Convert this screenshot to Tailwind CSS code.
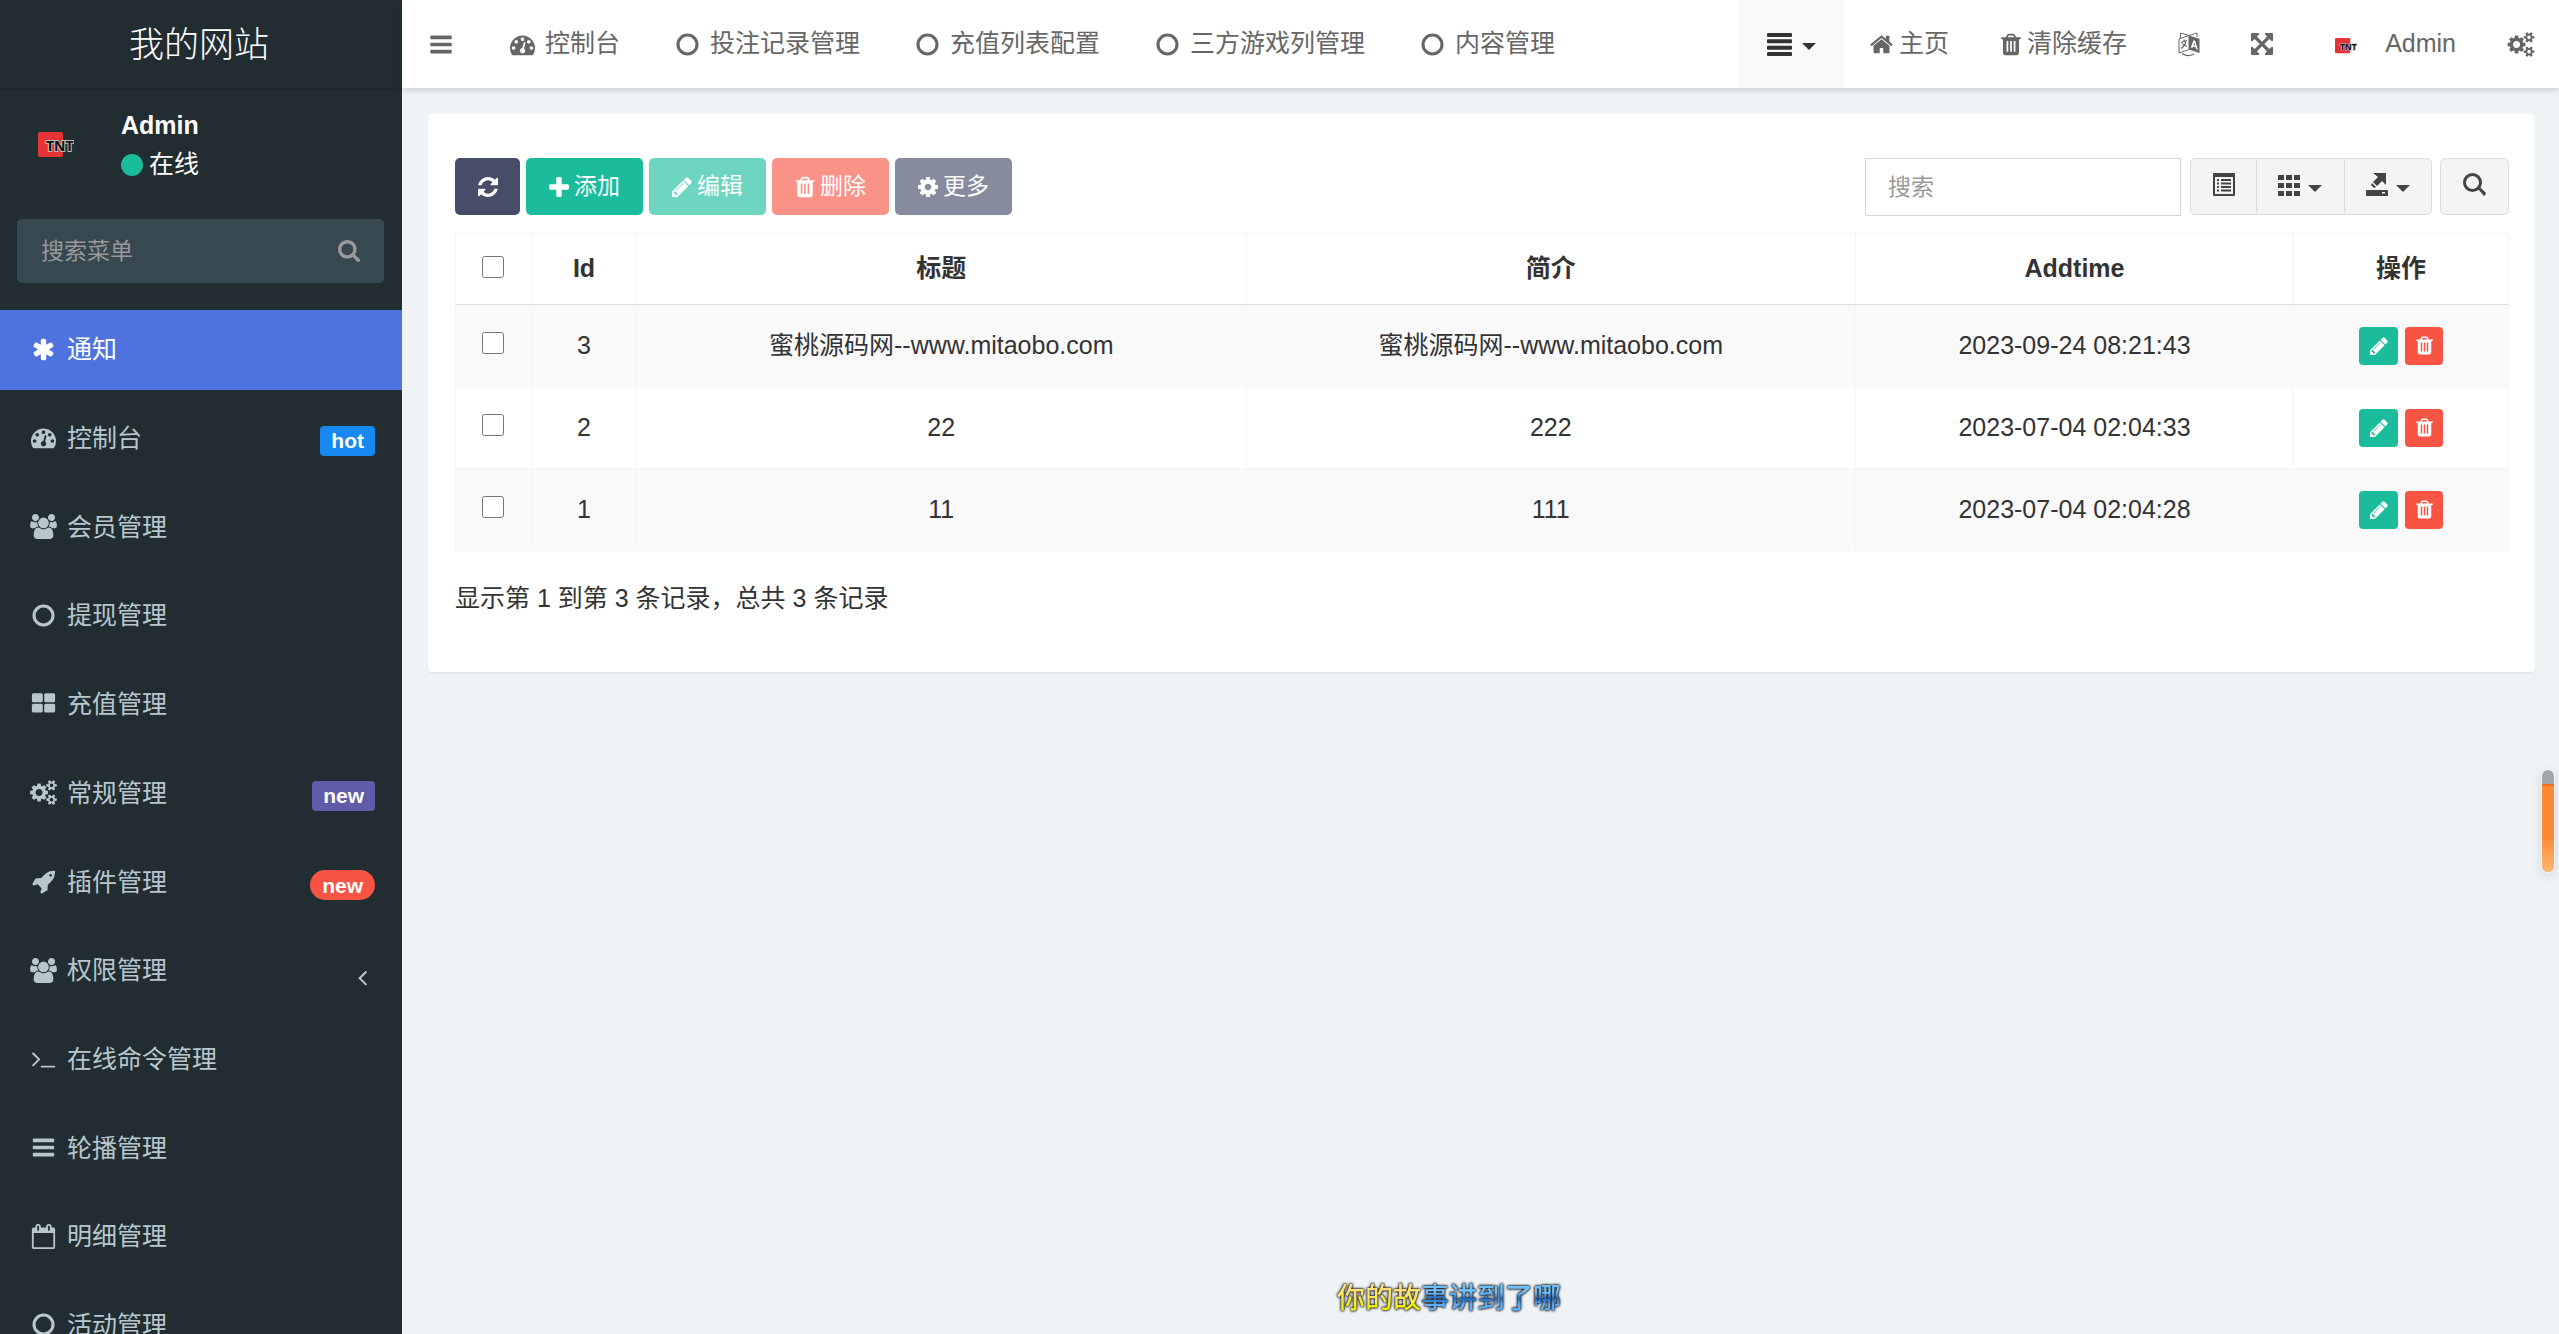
<!DOCTYPE html>
<html lang="zh-CN">
<head>
<meta charset="utf-8">
<meta name="viewport" content="width=device-width, initial-scale=1">
<title>我的网站</title>
<script src="https://cdn.jsdelivr.net/npm/@tailwindcss/browser@4"></script>
</head>
<body class="flex h-screen overflow-hidden bg-[#eff3f6] font-['Liberation_Sans','Noto_Sans_CJK_SC',sans-serif] text-[25px] text-[#333]">

<!-- Icon set -->
<svg class="hidden" aria-hidden="true">
  <symbol id="i-bars" viewBox="128 0 1536 1792"><path d="M1664 1344v128q0 26-19 45t-45 19h-1408q-26 0-45-19t-19-45v-128q0-26 19-45t45-19h1408q26 0 45 19t19 45zm0-512v128q0 26-19 45t-45 19h-1408q-26 0-45-19t-19-45v-128q0-26 19-45t45-19h1408q26 0 45 19t19 45zm0-512v128q0 26-19 45t-45 19h-1408q-26 0-45-19t-19-45v-128q0-26 19-45t45-19h1408q26 0 45 19t19 45z"/></symbol>
  <symbol id="i-search" viewBox="64 128 1664 1664"><path d="M1216 832q0-185-131.500-316.500t-316.500-131.500-316.500 131.500-131.500 316.500 131.500 316.500 316.500 131.500 316.500-131.500 131.500-316.500zm512 832q0 52-38 90t-90 38q-54 0-90-38l-343-342q-179 124-399 124-143 0-273.500-55.500t-225-150-150-225-55.500-273.500 55.500-273.500 150-225 225-150 273.500-55.500 273.500 55.500 225 150 150 225 55.500 273.500q0 220-124 399l343 343q37 37 37 90z"/></symbol>
  <symbol id="i-asterisk" viewBox="0 0 1792 1792"><path d="M1546 1050q46 26 59.500 77.500t-12.500 97.500l-64 110q-26 46-77.500 59.500t-97.500-12.500l-266-153v307q0 52-38 90t-90 38h-128q-52 0-90-38t-38-90v-307l-266 153q-46 26-97.500 12.500t-77.500-59.500l-64-110q-26-46-12.500-97.500t59.500-77.500l266-154-266-154q-46-26-59.500-77.500t12.500-97.500l64-110q26-46 77.500-59.500t97.500 12.500l266 153v-307q0-52 38-90t90-38h128q52 0 90 38t38 90v307l266-153q46-26 97.500-12.500t77.500 59.500l64 110q26 46 12.500 97.500t-59.500 77.500l-266 154z"/></symbol>
  <symbol id="i-dash" viewBox="0 0 1792 1792"><path d="M384 1152q0-53-37.500-90.500t-90.500-37.500-90.500 37.500-37.500 90.500 37.500 90.500 90.500 37.500 90.500-37.500 37.500-90.500zm192-448q0-53-37.500-90.500t-90.500-37.500-90.500 37.500-37.500 90.500 37.500 90.500 90.500 37.500 90.500-37.500 37.500-90.500zm428 481l101-382q6-26-7.500-48.500t-38.500-29.500-48 6.500-30 39.500l-101 382q-60 5-107 43.500t-63 98.500q-20 77 20 146t117 89 146-20 89-117q16-60-6-117t-72-91zm660-33q0-53-37.500-90.500t-90.500-37.500-90.500 37.500-37.500 90.500 37.500 90.500 90.500 37.500 90.500-37.500 37.500-90.500zm-640-640q0-53-37.500-90.500t-90.500-37.500-90.500 37.500-37.500 90.500 37.500 90.500 90.500 37.500 90.500-37.500 37.500-90.500zm448 192q0-53-37.500-90.500t-90.500-37.500-90.500 37.500-37.500 90.500 37.500 90.500 90.500 37.500 90.500-37.500 37.500-90.500zm320 448q0 261-141 483-19 29-54 29h-1402q-35 0-54-29-141-221-141-483 0-182 71-348t191-286 286-191 348-71 348 71 286 191 191 286 71 348z"/></symbol>
  <symbol id="i-users" viewBox="-64 0 1920 1792"><path d="M529 896q-162 5-265 128h-134q-82 0-138-40.500t-56-118.500q0-353 124-353 6 0 43.500 21t97.500 42.500 119 21.500q67 0 133-23-5 37-5 66 0 139 81 256zm1071 637q0 120-73 189.500t-194 69.500h-874q-121 0-194-69.500t-73-189.500q0-53 3.500-103.500t14-109 26.500-108.500 43-97.500 62-81 85.500-53.500 111.500-20q10 0 43 21.500t73 48 107 48 135 21.500 135-21.500 107-48 73-48 43-21.500q61 0 111.500 20t85.500 53.500 62 81 43 97.500 26.500 108.500 14 109 3.500 103.500zm-1024-1277q0 106-75 181t-181 75-181-75-75-181 75-181 181-75 181 75 75 181zm704 384q0 159-112.500 271.500t-271.500 112.500-271.500-112.500-112.500-271.500 112.500-271.500 271.500-112.500 271.500 112.500 112.500 271.500zm576 225q0 78-56 118.500t-138 40.500h-134q-103-123-265-128 81-117 81-256 0-29-5-66 66 23 133 23 59 0 119-21.500t97.500-42.500 43.500-21q124 0 124 353zm-128-609q0 106-75 181t-181 75-181-75-75-181 75-181 181-75 181 75 75 181z"/></symbol>
  <symbol id="i-ring" viewBox="0 0 1792 1792"><circle cx="896" cy="896" r="680" fill="none" stroke="currentColor" stroke-width="220"/></symbol>
  <symbol id="i-thlarge" viewBox="0 0 1792 1792"><rect x="64" y="160" width="780" height="640" rx="110"/><rect x="948" y="160" width="780" height="640" rx="110"/><rect x="64" y="910" width="780" height="640" rx="110"/><rect x="948" y="910" width="780" height="640" rx="110"/></symbol>
  <symbol id="i-cog" viewBox="128 128 1536 1536"><path d="M1152 896q0-106-75-181t-181-75-181 75-75 181 75 181 181 75 181-75 75-181zm512-109v222q0 12-8 23t-20 13l-185 28q-19 54-39 91 35 50 107 138 10 12 10 25t-9 23q-27 37-99 108t-94 71q-12 0-26-9l-138-108q-44 23-91 38-16 136-29 186-7 28-36 28h-222q-14 0-24.500-8.500t-11.500-21.500l-28-184q-49-16-90-37l-141 107q-10 9-25 9-14 0-25-11-126-114-165-168-7-10-7-23 0-12 8-23 15-21 51-66.500t54-70.500q-27-50-41-99l-183-27q-13-2-21-12.500t-8-23.500v-222q0-12 8-23t19-13l186-28q14-46 39-92-40-57-107-138-10-12-10-24 0-10 9-23 26-36 98.500-107.500t94.500-71.500q13 0 26 10l138 107q44-23 91-38 16-136 29-186 7-28 36-28h222q14 0 24.500 8.500t11.500 21.500l28 184q49 16 90 37l142-107q9-9 24-9 13 0 25 10 129 119 165 170 7 8 7 22 0 12-8 23-15 21-51 66.500t-54 70.500q26 50 41 98l183 28q13 2 21 12.500t8 23.500z"/></symbol>
  <symbol id="i-cogs" viewBox="-64 0 1920 1792"><path d="M832 896q0-106-75-181t-181-75-181 75-75 181 75 181 181 75 181-75 75-181zm768 512q0-52-38-90t-90-38-90 38-38 90q0 53 37.500 90.500t90.500 37.500 90.500-37.500 37.500-90.500zm0-1024q0-52-38-90t-90-38-90 38-38 90q0 53 37.500 90.500t90.500 37.500 90.500-37.500 37.500-90.500zm-384 421v185q0 10-7 19.500t-16 10.500l-155 24q-11 35-32 76 34 48 90 115 7 10 7 20 0 12-7 19-23 30-82.500 89.500t-78.500 59.500q-11 0-21-7l-115-90q-37 19-77 31-11 108-23 155-7 24-30 24h-186q-11 0-20-7.500t-10-17.500l-23-153q-34-10-75-31l-118 89q-7 7-20 7-11 0-21-8-144-133-144-160 0-9 7-19 10-14 41-53t47-61q-23-44-35-82l-152-24q-10-1-17-9.500t-7-19.500v-185q0-10 7-19.500t16-10.500l155-24q11-35 32-76-34-48-90-115-7-11-7-20 0-12 7-20 22-30 82-89t79-59q11 0 21 7l115 90q34-18 77-32 11-108 23-154 7-24 30-24h186q11 0 20 7.500t10 17.500l23 153q34 10 75 31l118-89q8-7 20-7 11 0 21 8 144 133 144 160 0 9-7 19-12 16-42 54t-45 60q23 48 34 82l152 23q10 2 17 10.500t7 19.500zm640 533v140q0 16-149 31-12 27-30 52 51 113 51 138 0 4-4 7-122 71-124 71-8 0-46-47t-52-68q-20 2-30 2t-30-2q-14 21-52 68t-46 47q-2 0-124-71-4-3-4-7 0-25 51-138-18-25-30-52-149-15-149-31v-140q0-16 149-31 13-29 30-52-51-113-51-138 0-4 4-7 4-2 35-20t59-34 30-16q8 0 46 46.500t52 67.500q20-2 30-2t30 2q51-71 92-112l6-2q4 0 124 70 4 3 4 7 0 25-51 138 17 23 30 52 149 15 149 31zm0-1024v140q0 16-149 31-12 27-30 52 51 113 51 138 0 4-4 7-122 71-124 71-8 0-46-47t-52-68q-20 2-30 2t-30-2q-14 21-52 68t-46 47q-2 0-124-71-4-3-4-7 0-25 51-138-18-25-30-52-149-15-149-31v-140q0-16 149-31 13-29 30-52-51-113-51-138 0-4 4-7 4-2 35-20t59-34 30-16q8 0 46 46.500t52 67.500q20-2 30-2t30 2q51-71 92-112l6-2q4 0 124 70 4 3 4 7 0 25-51 138 17 23 30 52 149 15 149 31z"/></symbol>
  <symbol id="i-rocket" viewBox="-64 0 1792 1792"><path d="M1440 448q0-40-28-68t-68-28-68 28-28 68 28 68 68 28 68-28 28-68zm224-288q0 249-75.500 430.500t-253.500 360.500q-81 80-195 176l-20 379q-2 16-16 26l-384 224q-7 4-16 4-12 0-23-9l-64-64q-13-14-8-32l85-276-281-281-276 85q-3 1-9 1-14 0-23-9l-64-64q-17-19-5-39l224-384q10-14 26-16l379-20q96-114 176-195 188-187 358-258t431-71q14 0 24 9.500t10 22.500z"/></symbol>
  <symbol id="i-terminal" viewBox="0 0 1792 1792"><path d="M649 983l-466 466q-10 10-23 10t-23-10l-50-50q-10-10-10-23t10-23l393-393-393-393q-10-10-10-23t10-23l50-50q10-10 23-10t23 10l466 466q10 10 10 23t-10 23zm1079 457v64q0 14-9 23t-23 9h-960q-14 0-23-9t-9-23v-64q0-14 9-23t23-9h960q14 0 23 9t9 23z"/></symbol>
  <symbol id="i-calendar" viewBox="0 0 1792 1792"><path d="M192 1664h1408v-1024h-1408v1024zm384-1216v-288q0-14-9-23t-23-9h-64q-14 0-23 9t-9 23v288q0 14 9 23t23 9h64q14 0 23-9t9-23zm768 0v-288q0-14-9-23t-23-9h-64q-14 0-23 9t-9 23v288q0 14 9 23t23 9h64q14 0 23-9t9-23zm384-64v1280q0 52-38 90t-90 38h-1408q-52 0-90-38t-38-90v-1280q0-52 38-90t90-38h128v-96q0-66 47-113t113-47h64q66 0 113 47t47 113v96h384v-96q0-66 47-113t113-47h64q66 0 113 47t47 113v96h128q52 0 90 38t38 90z"/></symbol>
  <symbol id="i-home" viewBox="64 0 1664 1792"><path d="M1472 992v480q0 26-19 45t-45 19h-384v-384h-256v384h-384q-26 0-45-19t-19-45v-480q0-1 .5-3t.5-3l575-474 575 474q1 2 1 6zm223-69l-62 74q-8 9-21 11h-3q-13 0-21-7l-692-577-692 577q-12 8-24 7-13-2-21-11l-62-74q-8-10-7-23.500t11-21.500l719-599q32-26 76-26t76 26l244 204v-195q0-14 9-23t23-9h192q14 0 23 9t9 23v408l219 182q10 8 11 21.500t-7 23.500z"/></symbol>
  <symbol id="i-trash" viewBox="192 0 1408 1792"><path d="M704 1376v-704q0-14-9-23t-23-9h-64q-14 0-23 9t-9 23v704q0 14 9 23t23 9h64q14 0 23-9t9-23zm256 0v-704q0-14-9-23t-23-9h-64q-14 0-23 9t-9 23v704q0 14 9 23t23 9h64q14 0 23-9t9-23zm256 0v-704q0-14-9-23t-23-9h-64q-14 0-23 9t-9 23v704q0 14 9 23t23 9h64q14 0 23-9t9-23zm-544-992h448l-48-117q-7-9-17-11h-317q-10 2-17 11zm928 32v64q0 14-9 23t-23 9h-96v948q0 83-47 143.500t-113 60.500h-832q-66 0-113-58.500t-47-141.500v-952h-96q-14 0-23-9t-9-23v-64q0-14 9-23t23-9h309l70-167q15-37 54-63t79-26h320q40 0 79 26t54 63l70 167h309q14 0 23 9t9 23z"/></symbol>
  <symbol id="i-pencil" viewBox="128 128 1536 1536"><path d="M491 1536l91-91-235-235-91 91v107h128v128h107zm523-928q0-22-22-22-10 0-17 7l-542 542q-7 7-7 17 0 22 22 22 10 0 17-7l542-542q7-7 7-17zm-54-192l416 416-832 832h-416v-416zm683 96q0 53-37 90l-166 166-416-416 166-165q36-38 90-38 53 0 91 38l235 234q37 39 37 91z"/></symbol>
  <symbol id="i-plus" viewBox="192 128 1408 1408"><path d="M1600 736v192q0 40-28 68t-68 28h-416v416q0 40-28 68t-68 28h-192q-40 0-68-28t-28-68v-416h-416q-40 0-68-28t-28-68v-192q0-40 28-68t68-28h416v-416q0-40 28-68t68-28h192q40 0 68 28t28 68v416h416q40 0 68 28t28 68z"/></symbol>
  <symbol id="i-refresh" viewBox="128 128 1536 1536"><path d="M1639 1056q0 5-1 7-64 268-268 434.500t-478 166.500q-146 0-282.500-55t-243.500-157l-129 129q-19 19-45 19t-45-19-19-45v-448q0-26 19-45t45-19h448q26 0 45 19t19 45-19 45l-137 137q71 66 161 102t187 36q134 0 250-65t186-179q11-17 53-117 8-23 30-23h192q13 0 22.500 9.500t9.500 22.500zm25-800v448q0 26-19 45t-45 19h-448q-26 0-45-19t-19-45 19-45l138-138q-148-137-349-137-134 0-250 65t-186 179q-11 17-53 117-8 23-30 23h-199q-13 0-22.500-9.500t-9.500-22.500v-7q65-268 270-434.500t480-166.500q146 0 284 55.500t245 156.500l130-129q19-19 45-19t45 19 19 45z"/></symbol>
  <symbol id="i-arrows" viewBox="128 128 1536 1536"><path d="M1411 541l-355 355 355 355 144-144q29-31 70-14 39 17 39 59v448q0 26-19 45t-45 19h-448q-42 0-59-40-17-39 14-69l144-144-355-355-355 355 144 144q31 30 14 69-17 40-59 40h-448q-26 0-45-19t-19-45v-448q0-42 40-59 39-17 69 14l144 144 355-355-355-355-144 144q-19 19-45 19-12 0-24-5-40-17-40-59v-448q0-26 19-45t45-19h448q42 0 59 40 17 39-14 69l-144 144 355 355 355-355-144-144q-31-30-14-69 17-40 59-40h448q26 0 45 19t19 45v448q0 42-39 59-13 5-25 5-26 0-45-19z"/></symbol>
  <symbol id="i-left" viewBox="588 480 615 1000"><path d="M1203 544q0 13-10 23l-393 393 393 393q10 10 10 23t-10 23l-50 50q-10 10-23 10t-23-10l-466-466q-10-10-10-23t10-23l466-466q10-10 23-10t23 10l50 50q10 10 10 23z"/></symbol>
  <symbol id="i-lang" viewBox="0 0 22 25"><path d="M11 3.500 1 7v14l10-3.500zM2.500 1v5M3 1l8 2.500L19 1v4" fill="none" stroke="currentColor" stroke-width="1"/><path d="M3 10.500l6-2M6 7.500v1.500M8 9.500q-1.500 5-5 7M4 11.500q2 2.500 5 3" fill="none" stroke="currentColor" stroke-width="1.200"/><path fill-rule="evenodd" d="M11 3.500l10.500 3.300V21L11 17.600zM15.500 8.200l-2.600 7.400 1.600.5.500-1.600 2.700.8.600 2 1.600.5-2.700-9zM16.400 10.800l.9 3-1.800-.6z"/><path d="M4 21.500q6 4 12 .5" fill="none" stroke="currentColor" stroke-width="1.200"/></symbol>
  <symbol id="i-justify" viewBox="0 0 25 23"><rect width="25" height="4" rx="1"/><rect y="6.300" width="25" height="4" rx="1"/><rect y="12.700" width="25" height="4" rx="1"/><rect y="19" width="25" height="4" rx="1"/></symbol>
  <symbol id="i-caret" viewBox="0 0 14 7"><path d="M0 0h14L7 7z"/></symbol>
  <symbol id="i-listalt" viewBox="0 0 22 23"><path fill-rule="evenodd" d="M1 0h20a1 1 0 0 1 1 1v21a1 1 0 0 1-1 1H1a1 1 0 0 1-1-1V1a1 1 0 0 1 1-1zM2 4v17h18V4z"/><path d="M4 6h2v2H4zm4 0h10v2H8zM4 9.500h2v2H4zm4 0h10v2H8zM4 13h2v2H4zm4 0h10v2H8zM4 16.500h2v2H4zm4 0h10v2H8z"/></symbol>
  <symbol id="i-th" viewBox="0 0 22 21"><path d="M0 0h6v5H0zm8 0h6v5H8zm8 0h6v5h-6zM0 8h6v5H0zm8 0h6v5H8zm8 0h6v5h-6zM0 16h6v5H0zm8 0h6v5H8zm8 0h6v5h-6z"/></symbol>
  <symbol id="i-export" viewBox="0 0 22 23"><path d="M7 0h13v12l-4-4-5 5-4-4 5-5zM6 10l4 4-2 1-3-3z"/><path fill-rule="evenodd" d="M1 17h20a1 1 0 0 1 1 1v5H0v-5a1 1 0 0 1 1-1zm15 2v1.500h3V19z"/></symbol>
  <symbol id="i-glass" viewBox="0 0 23 23"><circle cx="9.500" cy="9.500" r="8" fill="none" stroke="currentColor" stroke-width="3"/><path d="M15 16l2-2 6 6q0 2-2 3z"/></symbol>
  <symbol id="i-tnt" viewBox="0 0 36 26"><rect width="25" height="25" rx="2" fill="#e83336"/><text x="8" y="19" font-family="Open Sans, Noto Sans, sans-serif" font-size="14" font-weight="700" fill="#111" stroke="#bbb" stroke-width="2" paint-order="stroke">TNT</text></symbol>
</svg>

<aside class="h-screen w-[402px] shrink-0 overflow-hidden bg-[#222d32] text-[#b8c7ce]">
  <a href="#" class="flex h-[89px] items-center justify-center border-b border-[#1e282c] pt-[2px] pr-1 text-[35px] font-light text-white">我的网站</a>
  <div class="flex h-[130px] pt-5 pl-[38px] text-white">
    <svg class="mt-[23px] h-[26px] w-9 shrink-0"><use href="#i-tnt"/></svg>
    <div class="ml-[47px]">
      <p class="h-8 font-bold leading-8">Admin</p>
      <a href="#" class="mt-1 flex h-10 items-center gap-[6px]"><span class="size-[22px] rounded-full bg-[#1abc9c]"></span>在线</a>
    </div>
  </div>
  <form class="mr-[18px] ml-[17px] flex h-16 items-center rounded-[5px] bg-[#374850] pr-6 pl-6">
    <input type="text" placeholder="搜索菜单" aria-label="搜索菜单" class="min-w-0 flex-1 bg-transparent text-[23px] placeholder-[#999] outline-none">
    <button type="button" aria-label="搜索" class="text-[#999]"><svg class="size-[22px] fill-current"><use href="#i-search"/></svg></button>
  </form>
  <nav class="mt-[27px] flex h-[1056px] flex-col justify-between">
    <a href="#" class="flex h-20 items-center bg-[#4e73df] pr-[27px] pl-7 text-white"><svg class="mr-2 mb-[2px] h-[25px] w-[31px] fill-current"><use href="#i-asterisk"/></svg>通知</a>
    <a href="#" class="flex h-20 items-center pr-[27px] pl-7"><svg class="mr-2 mb-[2px] h-[25px] w-[31px] fill-current"><use href="#i-dash"/></svg>控制台<span class="mt-1 ml-auto flex h-[30px] items-center rounded-[4px] bg-[#1688f1] px-[11px] text-[21px] font-bold text-white">hot</span></a>
    <a href="#" class="flex h-20 items-center pr-[27px] pl-7"><svg class="mr-2 mb-[2px] h-[25px] w-[31px] fill-current"><use href="#i-users"/></svg>会员管理</a>
    <a href="#" class="flex h-20 items-center pr-[27px] pl-7"><svg class="mr-2 mb-[2px] h-[25px] w-[31px] fill-current"><use href="#i-ring"/></svg>提现管理</a>
    <a href="#" class="flex h-20 items-center pr-[27px] pl-7"><svg class="mr-2 mb-[2px] h-[25px] w-[31px] fill-current"><use href="#i-thlarge"/></svg>充值管理</a>
    <a href="#" class="flex h-20 items-center pr-[27px] pl-7"><svg class="mr-2 mb-[2px] h-[25px] w-[31px] fill-current"><use href="#i-cogs"/></svg>常规管理<span class="mt-1 ml-auto flex h-[30px] items-center rounded-[4px] bg-[#605ca8] px-[11px] text-[21px] font-bold text-white">new</span></a>
    <a href="#" class="flex h-20 items-center pr-[27px] pl-7"><svg class="mr-2 mb-[2px] h-[25px] w-[31px] fill-current"><use href="#i-rocket"/></svg>插件管理<span class="mt-[6px] ml-auto flex h-[30px] items-center rounded-full bg-[#f75444] px-3 text-[21px] font-bold text-white">new</span></a>
    <a href="#" class="flex h-20 items-center pr-[35px] pl-7"><svg class="mr-2 mb-[2px] h-[25px] w-[31px] fill-current"><use href="#i-users"/></svg>权限管理<svg class="mt-[14px] ml-auto h-[15px] w-[9px] fill-current"><use href="#i-left"/></svg></a>
    <a href="#" class="flex h-20 items-center pr-[27px] pl-7"><svg class="mr-2 mb-[2px] h-[25px] w-[31px] fill-current"><use href="#i-terminal"/></svg>在线命令管理</a>
    <a href="#" class="flex h-20 items-center pr-[27px] pl-7"><svg class="mr-2 mb-[2px] h-[25px] w-[31px] fill-current"><use href="#i-bars"/></svg>轮播管理</a>
    <a href="#" class="flex h-20 items-center pr-[27px] pl-7"><svg class="mr-2 mb-[2px] h-[25px] w-[31px] fill-current"><use href="#i-calendar"/></svg>明细管理</a>
    <a href="#" class="flex h-20 items-center pr-[27px] pl-7"><svg class="mr-2 mb-[2px] h-[25px] w-[31px] fill-current"><use href="#i-ring"/></svg>活动管理</a>
  </nav>
</aside>

<div class="flex min-w-0 flex-1 flex-col">
  <header class="flex h-[88px] shrink-0 items-center bg-white pr-6 pl-7 whitespace-nowrap text-[#666] shadow-[0_2px_6px_rgba(0,21,41,0.16)]">
    <button type="button" aria-label="切换菜单"><svg class="h-[25px] w-[22px] fill-current"><use href="#i-bars"/></svg></button>
    <nav class="ml-[55px] flex items-center gap-[52px]">
      <a href="#" class="flex items-center gap-[7px]"><svg class="h-[25px] w-[31px] fill-current"><use href="#i-dash"/></svg>控制台</a>
      <a href="#" class="flex items-center gap-[7px]"><svg class="h-[25px] w-[31px] fill-current"><use href="#i-ring"/></svg>投注记录管理</a>
      <a href="#" class="flex items-center gap-[7px]"><svg class="h-[25px] w-[31px] fill-current"><use href="#i-ring"/></svg>充值列表配置</a>
      <a href="#" class="flex items-center gap-[7px]"><svg class="h-[25px] w-[31px] fill-current"><use href="#i-ring"/></svg>三方游戏列管理</a>
      <a href="#" class="flex items-center gap-[7px]"><svg class="h-[25px] w-[31px] fill-current"><use href="#i-ring"/></svg>内容管理</a>
    </nav>
    <button type="button" aria-label="更多菜单" class="ml-auto flex h-[88px] items-center gap-[10px] bg-[#f9f9f9] px-7 text-[#333]"><svg class="h-[23px] w-[25px] fill-current"><use href="#i-justify"/></svg><svg class="mt-1 h-[7px] w-[14px] fill-current"><use href="#i-caret"/></svg></button>
    <a href="#" class="flex items-center gap-[6px] px-[26px]"><svg class="h-[25px] w-[23px] fill-current"><use href="#i-home"/></svg>主页</a>
    <a href="#" class="flex items-center gap-[6px] px-[26px]"><svg class="h-[25px] w-5 fill-current"><use href="#i-trash"/></svg>清除缓存</a>
    <button type="button" aria-label="语言" class="px-[25px]"><svg class="h-[25px] w-[22px] fill-current"><use href="#i-lang"/></svg></button>
    <button type="button" aria-label="全屏" class="px-[26px]"><svg class="size-[22px] fill-current"><use href="#i-arrows"/></svg></button>
    <a href="#" class="flex items-center gap-7 pr-[25px] pl-9"><svg class="mt-1 h-4 w-[22px]"><use href="#i-tnt"/></svg>Admin</a>
    <button type="button" aria-label="设置" class="pl-[26px]"><svg class="h-[25px] w-7 fill-current"><use href="#i-cogs"/></svg></button>
  </header>

  <main class="p-[26px] pr-6">
    <section class="rounded-[4px] bg-white pt-11 pr-[26px] pb-[54px] pl-[27px] shadow-[0_1px_2px_rgba(0,0,0,0.07)]">
      <div class="flex items-start text-[23px]">
        <div class="flex gap-[6px] text-white">
          <button type="button" aria-label="刷新" class="flex h-[57px] w-[65px] items-center justify-center rounded-[5px] bg-[#474d69]"><svg class="size-5 fill-current"><use href="#i-refresh"/></svg></button>
          <button type="button" class="flex h-[57px] items-center gap-[5px] rounded-[5px] bg-[#1abc9c] px-[23px]"><svg class="size-5 fill-current"><use href="#i-plus"/></svg>添加</button>
          <button type="button" class="flex h-[57px] items-center gap-[5px] rounded-[5px] bg-[#6dd5c0] px-[23px]"><svg class="size-5 fill-current"><use href="#i-pencil"/></svg>编辑</button>
          <button type="button" class="flex h-[57px] items-center gap-[5px] rounded-[5px] bg-[#fa9288] px-[23px]"><svg class="h-6 w-5 fill-current"><use href="#i-trash"/></svg>删除</button>
          <button type="button" class="flex h-[57px] items-center gap-[5px] rounded-[5px] bg-[#878b9e] px-[23px]"><svg class="size-5 fill-current"><use href="#i-cog"/></svg>更多</button>
        </div>
        <input type="text" placeholder="搜索" aria-label="搜索" class="ml-auto h-[58px] w-[316px] border border-[#d2d6de] px-[22px] placeholder-[#999] outline-none">
        <div class="ml-[9px] flex h-[57px] w-[242px] divide-x divide-[#ddd] overflow-hidden rounded-[5px] border border-[#ddd] bg-[#f4f4f4] text-[#444]">
          <button type="button" aria-label="切换" class="flex w-[66px] items-center justify-center pb-1"><svg class="h-[23px] w-[22px] fill-current"><use href="#i-listalt"/></svg></button>
          <button type="button" aria-label="列" class="flex flex-1 items-center justify-center gap-2"><svg class="mb-[2px] h-[21px] w-[22px] fill-current"><use href="#i-th"/></svg><svg class="mt-1 h-[7px] w-[14px] fill-current"><use href="#i-caret"/></svg></button>
          <button type="button" aria-label="导出数据" class="flex flex-1 items-center justify-center gap-2"><svg class="mb-1 h-[23px] w-[22px] fill-current"><use href="#i-export"/></svg><svg class="mt-1 h-[7px] w-[14px] fill-current"><use href="#i-caret"/></svg></button>
        </div>
        <button type="button" aria-label="普通搜索" class="ml-2 flex h-[57px] w-[69px] items-center justify-center rounded-[5px] border border-[#ddd] bg-[#f4f4f4] pb-1 text-[#444]"><svg class="size-[23px] fill-current"><use href="#i-glass"/></svg></button>
      </div>

      <table class="mt-[17px] w-full table-fixed border-collapse text-center [&_td]:border [&_td]:border-[#f4f4f4] [&_th]:border [&_th]:border-[#f4f4f4]">
        <colgroup><col class="w-[76px]"><col class="w-[105px]"><col><col><col class="w-[438px]"><col class="w-[215px]"></colgroup>
        <thead>
          <tr class="h-[71px] [&_th]:border-b-[#ddd]"><th class="pr-[2px] pb-2"><input type="checkbox" aria-label="全选" class="size-[22px] align-middle"></th><th>Id</th><th>标题</th><th>简介</th><th>Addtime</th><th>操作</th></tr>
        </thead>
        <tbody>
          <tr class="h-[82px] bg-[#f9f9f9]"><td class="pr-[2px] pb-2"><input type="checkbox" aria-label="选择 3" class="size-[22px] align-middle"></td><td>3</td><td>蜜桃源码网--www.mitaobo.com</td><td>蜜桃源码网--www.mitaobo.com</td><td>2023-09-24 08:21:43</td>
            <td><div class="flex justify-center gap-[7px] text-white"><button type="button" aria-label="编辑" class="flex h-[38px] w-[39px] items-center justify-center rounded-[4px] bg-[#1abc9c]"><svg class="size-[18px] fill-current"><use href="#i-pencil"/></svg></button><button type="button" aria-label="删除" class="flex h-[38px] w-[38px] items-center justify-center rounded-[4px] bg-[#f75444]"><svg class="h-[21px] w-[17px] fill-current"><use href="#i-trash"/></svg></button></div></td></tr>
          <tr class="h-[82px]"><td class="pr-[2px] pb-2"><input type="checkbox" aria-label="选择 2" class="size-[22px] align-middle"></td><td>2</td><td>22</td><td>222</td><td>2023-07-04 02:04:33</td>
            <td><div class="flex justify-center gap-[7px] text-white"><button type="button" aria-label="编辑" class="flex h-[38px] w-[39px] items-center justify-center rounded-[4px] bg-[#1abc9c]"><svg class="size-[18px] fill-current"><use href="#i-pencil"/></svg></button><button type="button" aria-label="删除" class="flex h-[38px] w-[38px] items-center justify-center rounded-[4px] bg-[#f75444]"><svg class="h-[21px] w-[17px] fill-current"><use href="#i-trash"/></svg></button></div></td></tr>
          <tr class="h-[82px] bg-[#f9f9f9]"><td class="pr-[2px] pb-2"><input type="checkbox" aria-label="选择 1" class="size-[22px] align-middle"></td><td>1</td><td>11</td><td>111</td><td>2023-07-04 02:04:28</td>
            <td><div class="flex justify-center gap-[7px] text-white"><button type="button" aria-label="编辑" class="flex h-[38px] w-[39px] items-center justify-center rounded-[4px] bg-[#1abc9c]"><svg class="size-[18px] fill-current"><use href="#i-pencil"/></svg></button><button type="button" aria-label="删除" class="flex h-[38px] w-[38px] items-center justify-center rounded-[4px] bg-[#f75444]"><svg class="h-[21px] w-[17px] fill-current"><use href="#i-trash"/></svg></button></div></td></tr>
        </tbody>
      </table>
      <p class="mt-[27px] leading-10">显示第 1 到第 3 条记录，总共 3 条记录</p>
    </section>
  </main>
</div>

<!-- Floating meter -->
<div class="fixed top-[770px] right-[5px] h-[102px] w-3 overflow-hidden rounded-full bg-[#a5a6a7] pt-[14px] shadow-[0_3px_8px_3px_rgba(0,0,0,0.08)] ring-1 ring-white/70">
  <div class="h-full border-t-2 border-[#ef6c1a] bg-linear-to-b from-[#ff8835] from-60% to-[#ffb870]"></div>
</div>

<!-- Desktop lyric line -->
<p class="fixed top-[1279px] left-[1337px] text-[28px] leading-10 font-medium whitespace-nowrap [filter:drop-shadow(0_0_1px_#222)_drop-shadow(0_0_1px_#222)]"><span class="bg-linear-to-b from-[#ffe070] from-30% to-[#f0f000] to-70% bg-clip-text text-transparent">你的故</span><span class="bg-linear-to-b from-[#6cc0ff] from-30% via-[#1c68c0] to-[#5cb0ff] to-70% bg-clip-text text-transparent">事讲到了哪</span></p>

</body>
</html>
